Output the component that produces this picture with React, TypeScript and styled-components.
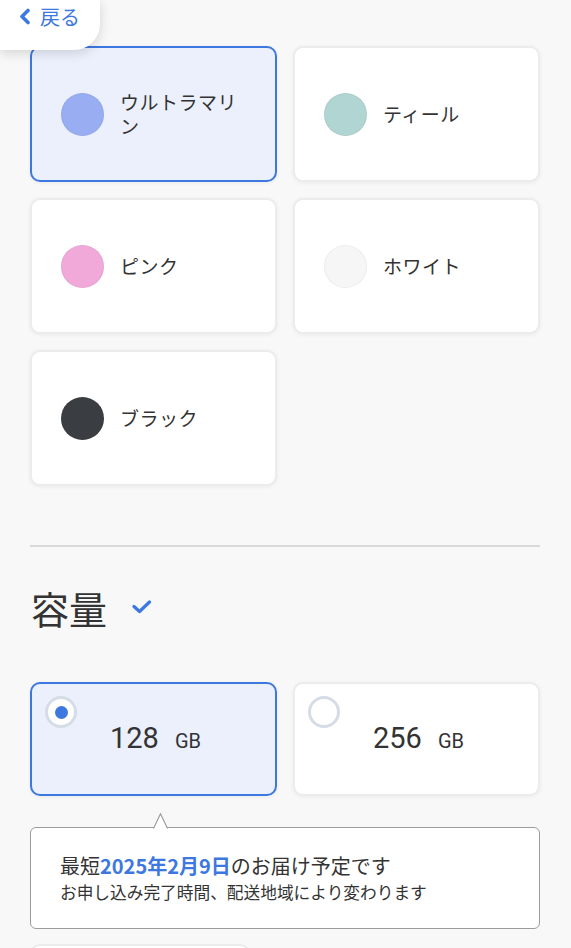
import styled, { createGlobalStyle } from 'styled-components';

const Blue = '#3d78e0';
const Text = '#333333';

const GlobalStyle = createGlobalStyle`
	html, body {
		margin: 0;
		padding: 0;
		background-color: #f8f8f8;
	}
	body {
		font-family: Roboto, 'Noto Sans CJK JP', sans-serif;
		color: ${Text};
	}
	* {
		box-sizing: border-box;
	}
`;

const Page = styled.div`
	position: relative;
	padding: 46px 31px 0 30px;
	height: 948px;
	overflow: hidden;
`;

const BackButton = styled.a`
	position: absolute;
	top: 0;
	left: 0;
	z-index: 2;
	display: flex;
	align-items: center;
	gap: 9px;
	width: 100px;
	height: 50px;
	padding: 0 0 17px 19px;
	background-color: #ffffff;
	border-bottom-right-radius: 26px;
	box-shadow: 0 3px 12px rgba(0, 0, 0, 0.15);
	color: ${Blue};
	font-family: 'Noto Sans CJK JP', sans-serif;
	font-size: 20px;
	text-decoration: none;
`;

const Grid = styled.div<{ $rows: number }>`
	display: grid;
	grid-template-columns: 1fr 1fr;
	grid-auto-rows: ${({ $rows }) => $rows}px;
	gap: 16px;
`;

const ColorCard = styled.div<{ $selected?: boolean }>`
	display: flex;
	align-items: center;
	gap: 16px;
	padding: 0 24px 0 29px;
	border: 2px solid ${({ $selected }) => ($selected ? Blue : '#ececec')};
	border-radius: 10px;
	background-color: ${({ $selected }) => ($selected ? '#ebf0fc' : '#ffffff')};
	box-shadow: 0 1px 4px rgba(0, 0, 0, 0.06);
`;

const Swatch = styled.span<{ $color: string }>`
	flex: none;
	width: 43px;
	height: 43px;
	border-radius: 50%;
	background-color: ${({ $color }) => $color};
	border: 1px solid rgba(0, 0, 0, 0.04);
`;

const ColorName = styled.span`
	font-family: 'Noto Sans CJK JP', sans-serif;
	font-size: 19px;
	line-height: 24px;
	letter-spacing: 0.5px;
	color: ${Text};
`;

const Divider = styled.hr`
	margin: 59px 0 0;
	border: none;
	border-top: 2px solid #d9d9d9;
`;

const Heading = styled.h2`
	display: flex;
	align-items: center;
	gap: 25px;
	margin: 36px 0 49px;
	padding-left: 1px;
	font-family: 'Noto Sans CJK JP', sans-serif;
	font-size: 38px;
	font-weight: 400;
	line-height: 50px;
	color: #333;

	svg {
		margin-top: -2px;
	}
`;

const CapacityCard = styled(ColorCard)`
	position: relative;
	justify-content: center;
	align-items: baseline;
	align-content: center;
	flex-wrap: wrap;
	gap: 16px;
	padding: 0 0 2px 4px;
`;

const Radio = styled.span<{ $checked?: boolean }>`
	position: absolute;
	top: 12px;
	left: 13px;
	display: flex;
	align-items: center;
	justify-content: center;
	width: 32px;
	height: 32px;
	border-radius: 50%;
	border: 3px solid #d6dce6;
	background-color: #ffffff;

	&::after {
		content: '';
		display: ${({ $checked }) => ($checked ? 'block' : 'none')};
		width: 13px;
		height: 13px;
		border-radius: 50%;
		background-color: ${Blue};
	}
`;

const Size = styled.span`
	font-family: Roboto, sans-serif;
	font-size: 29px;
	line-height: 34px;
	color: #333;
`;

const Unit = styled.span`
	font-family: Roboto, sans-serif;
	font-size: 20px;
	color: #333;
`;

const Notice = styled.div`
	position: relative;
	margin-top: 31px;
	height: 102px;
	padding: 23px 29px 0;
	border: 1px solid #9c9c9c;
	border-radius: 6px;
	background-color: #ffffff;
	font-family: 'Noto Sans CJK JP', sans-serif;

	svg {
		position: absolute;
		top: -15px;
		left: 122px;
	}
`;

const NoticeMain = styled.p`
	margin: 0;
	font-size: 20px;
	line-height: 29px;
	color: #333;

	strong {
		color: ${Blue};
		font-weight: 700;
	}
`;

const NoticeSub = styled.p`
	margin: 0;
	font-size: 16.7px;
	line-height: 25px;
	color: #333;
`;

const PeekCard = styled.div`
	margin-top: 15px;
	width: 220px;
	height: 60px;
	border: 2px solid #ececec;
	border-radius: 10px;
	background-color: #ffffff;
`;

const colors = [
	{ name: 'ウルトラマリン', color: '#99aef2', selected: true },
	{ name: 'ティール', color: '#b1d5d2' },
	{ name: 'ピンク', color: '#f0a9d9' },
	{ name: 'ホワイト', color: '#f6f6f6' },
	{ name: 'ブラック', color: '#3a3d41' },
];

const capacities = [
	{ size: '128', checked: true },
	{ size: '256' },
];

export default function App() {
	return (
		<>
			<GlobalStyle />
			<Page>
				<BackButton href='#'>
					<svg width='12' height='17' viewBox='0 0 12 17'>
						<polyline
							points='9,2.5 3,8.5 9,14.5'
							fill='none'
							stroke={Blue}
							strokeWidth='3.6'
							strokeLinecap='round'
							strokeLinejoin='round'
						/>
					</svg>
					戻る
				</BackButton>

				<Grid $rows={136}>
					{colors.map((c) => (
						<ColorCard key={c.name} $selected={c.selected}>
							<Swatch $color={c.color} />
							<ColorName>{c.name}</ColorName>
						</ColorCard>
					))}
				</Grid>

				<Divider />

				<Heading>
					容量
					<svg width='20' height='14' viewBox='0 0 20 14'>
						<polyline
							points='2,6.5 7.5,11.5 17.5,2'
							fill='none'
							stroke={Blue}
							strokeWidth='3.2'
							strokeLinecap='round'
							strokeLinejoin='round'
						/>
					</svg>
				</Heading>

				<Grid $rows={114}>
					{capacities.map((c) => (
						<CapacityCard key={c.size} $selected={c.checked}>
							<Radio $checked={c.checked} />
							<Size>{c.size}</Size>
							<Unit>GB</Unit>
						</CapacityCard>
					))}
				</Grid>

				<Notice>
					<svg width='15' height='17' viewBox='0 0 15 17'>
						<polygon points='0.5,16 7.5,0.8 14.5,16' fill='#ffffff' />
						<polyline points='0.5,15.5 7.5,0.8 14.5,15.5' fill='none' stroke='#9c9c9c' strokeWidth='1.2' />
					</svg>
					<NoticeMain>
						最短<strong>2025年2月9日</strong>のお届け予定です
					</NoticeMain>
					<NoticeSub>お申し込み完了時間、配送地域により変わります</NoticeSub>
				</Notice>

				<PeekCard />
			</Page>
		</>
	);
}
